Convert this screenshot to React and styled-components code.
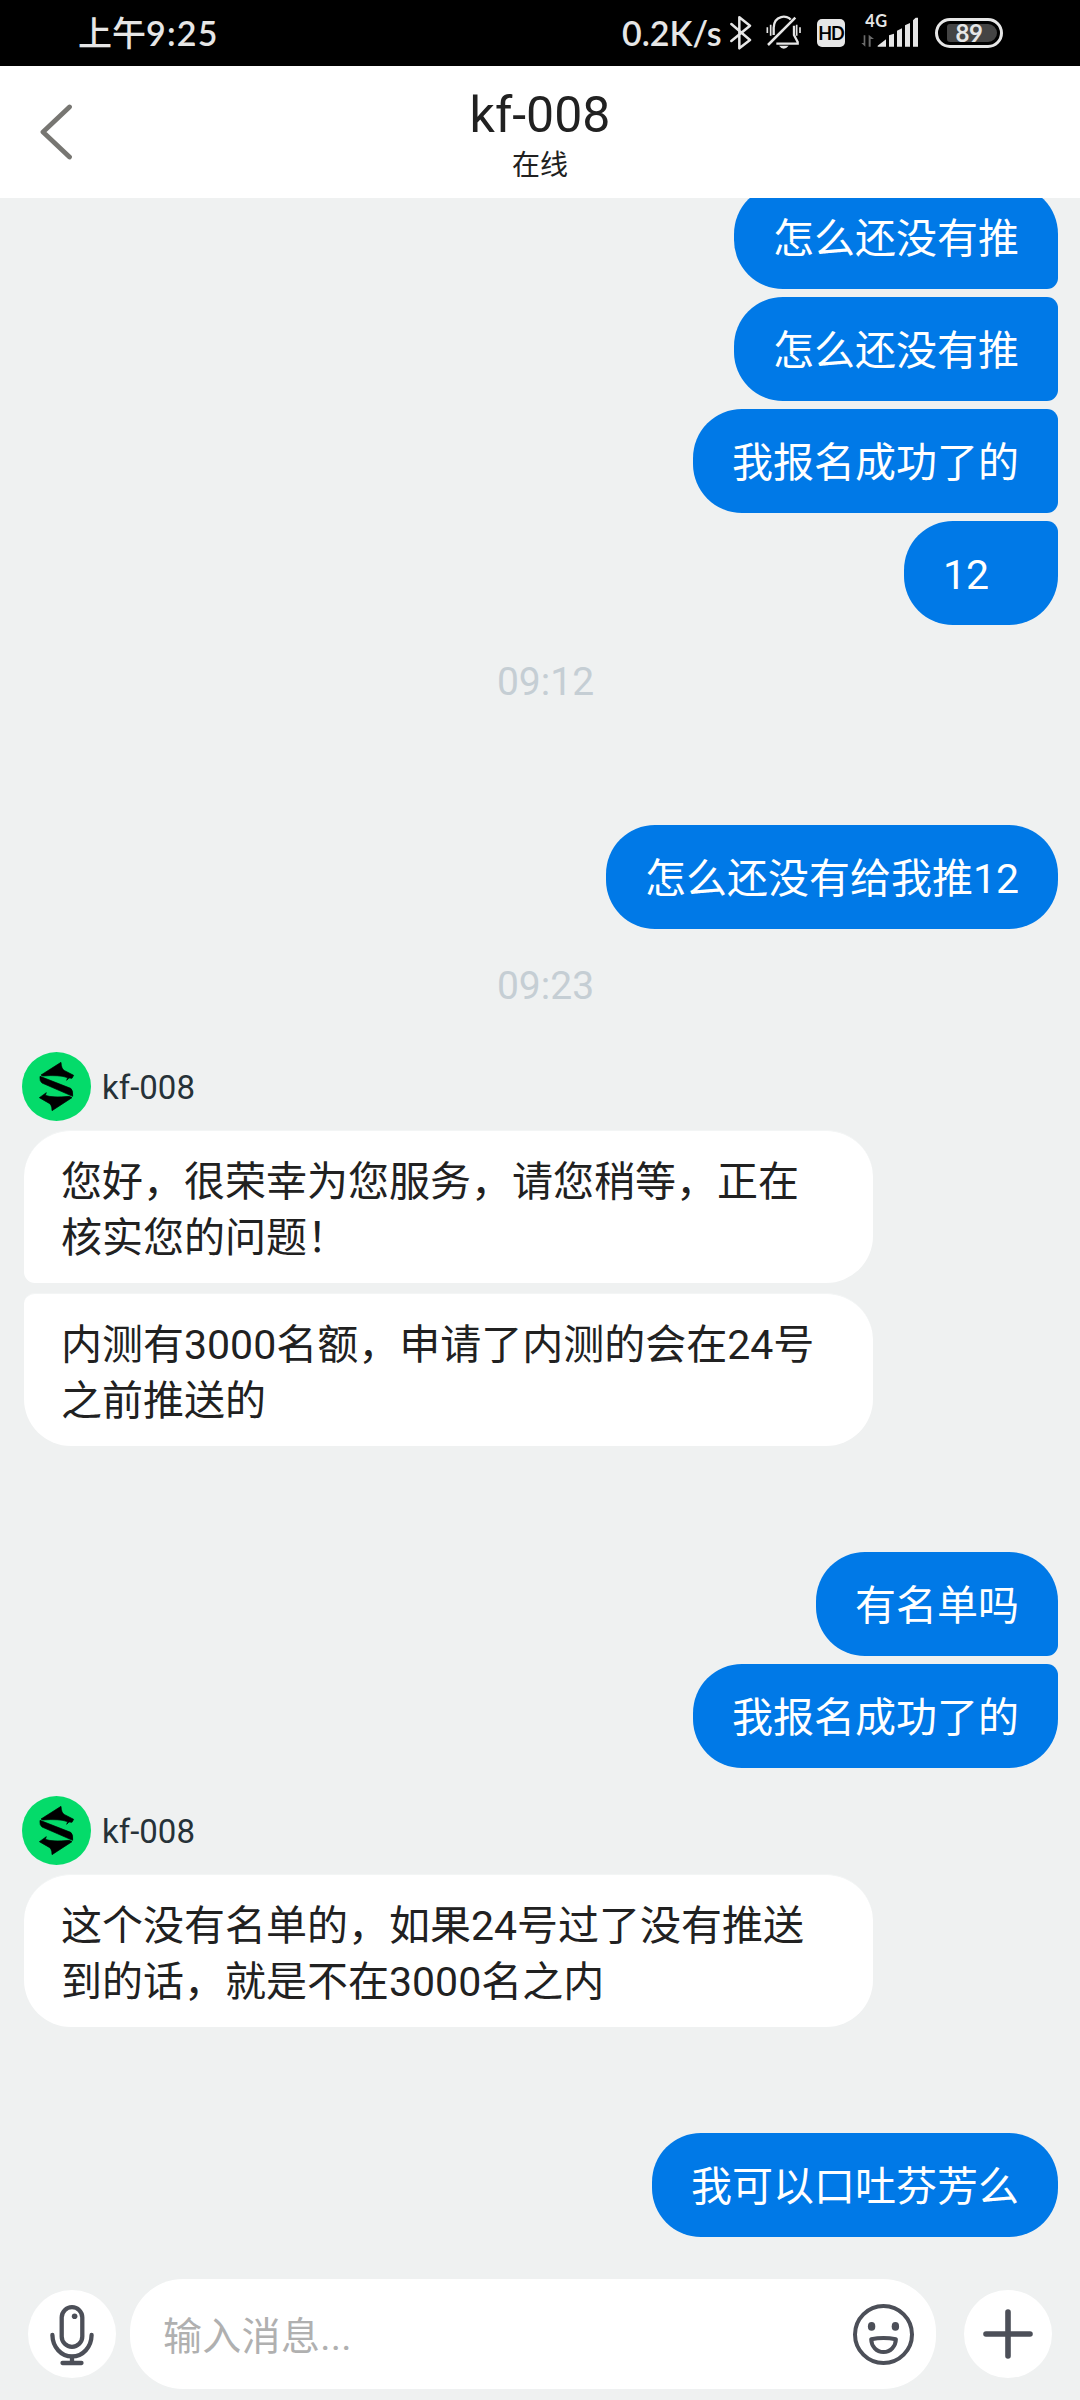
import React from 'react';
import styled, {createGlobalStyle} from 'styled-components';

const conversation = [
    {type: 'sent', top: -13, messages: ['怎么还没有推', '怎么还没有推', '我报名成功了的', '12']},
    {type: 'time', top: 33, label: '09:12'},
    {type: 'sent', top: 121, messages: ['怎么还没有给我推12']},
    {type: 'time', top: 33, label: '09:23'},
    {type: 'received', top: 44, messages: [
        ['您好，很荣幸为您服务，请您稍等，正在', '核实您的问题！'],
        ['内测有3000名额，申请了内测的会在24号', '之前推送的']
    ]},
    {type: 'sent', top: 106, messages: ['有名单吗', '我报名成功了的']},
    {type: 'received', top: 28, messages: [
        ['这个没有名单的，如果24号过了没有推送', '到的话，就是不在3000名之内']
    ]},
    {type: 'sent', top: 106, messages: ['我可以口吐芬芳么']}
];

const App = () => {
    return <Screen>
        <GlobalStyle/>
        <StatusBar/>
        <Header/>
        <Chat>
            {conversation.map((entry, i) => {
                if(entry.type === 'time') return <TimeLabel key={i} $top={entry.top}>{entry.label}</TimeLabel>
                if(entry.type === 'sent') return <SentMessages key={i} {...entry}/>
                return <ReceivedMessages key={i} {...entry}/>
            })}
        </Chat>
        <Composer/>
    </Screen>
}

const StatusBar = () => {
    return <StatusBarContainer>
        <Clock><ClockPeriod>上午</ClockPeriod>9:25</Clock>
        <NetSpeed>0.2K/s</NetSpeed>
        <BluetoothIcon/>
        <MutedBellIcon/>
        <HdBadge>HD</HdBadge>
        <SignalIcon/>
        <Battery>
            <BatteryLevel>89</BatteryLevel>
        </Battery>
    </StatusBarContainer>
}

const Header = () => {
    return <HeaderContainer>
        <BackButton aria-label="Back">
            <svg width="34" height="58" viewBox="0 0 34 58" fill="none" stroke="#777672" strokeWidth="4.8" strokeLinecap="round" strokeLinejoin="round">
                <path d="M29.5 4 L3 29 L29.5 54"/>
            </svg>
        </BackButton>
        <Titles>
            <Title>kf-008</Title>
            <Subtitle>在线</Subtitle>
        </Titles>
    </HeaderContainer>
}

const SentMessages = ({messages, top}) => {
    return <SentGroup $top={top}>
        {messages.map((text, i) => <SentBubble key={i} $first={i === 0} $last={i === messages.length - 1}>{text}</SentBubble>)}
    </SentGroup>
}

const ReceivedMessages = ({messages, top}) => {
    return <ReceivedGroup $top={top}>
        <Sender>
            <Avatar/>
            <SenderName>kf-008</SenderName>
        </Sender>
        {messages.map((lines, i) => <ReceivedBubble key={i} $joinTop={i > 0} $joinBottom={i < messages.length - 1}>
            {lines.map(line => <div key={line}>{line}</div>)}
        </ReceivedBubble>)}
    </ReceivedGroup>
}

const Composer = () => {
    return <ComposerContainer>
        <RoundButton aria-label="Voice">
            <svg width="88" height="88" viewBox="0 0 88 88" fill="none" stroke="#4c4f58" strokeWidth="4.3" strokeLinecap="round">
                <rect x="33.7" y="17.2" width="20.6" height="39.6" rx="10.3"/>
                <path d="M24.4 45 C24.6 57 33 66.4 44 66.4 S63.4 57 63.6 45"/>
                <path d="M44 67 V72 M34.5 73 H53.5"/>
                <circle cx="46.6" cy="26.2" r="2.8" fill="#4c4f58" stroke="none"/>
            </svg>
        </RoundButton>
        <InputBox>
            <Placeholder>输入消息...</Placeholder>
            <svg width="61" height="61" viewBox="0 0 61 61" fill="none" stroke="#4c4f58" strokeWidth="4" strokeLinejoin="round">
                <circle cx="30.5" cy="30.5" r="28.5"/>
                <ellipse cx="18.6" cy="22.4" rx="3.7" ry="4.4" fill="#4c4f58" stroke="none"/>
                <ellipse cx="42.4" cy="22.4" rx="3.7" ry="4.4" fill="#4c4f58" stroke="none"/>
                <path d="M18.2 35.2 Q30.5 33 42.9 35.2 C42.7 42.4 37.5 48 30.5 48 S18.4 42.4 18.2 35.2 Z"/>
            </svg>
        </InputBox>
        <RoundButton aria-label="More">
            <svg width="88" height="88" viewBox="0 0 88 88" stroke="#4c4f58" strokeWidth="5.6" strokeLinecap="round">
                <path d="M44 22 V66 M22 44 H66"/>
            </svg>
        </RoundButton>
    </ComposerContainer>
}

const Avatar = () => {
    return <svg width="69" height="69" viewBox="0 0 207 207" stroke="#000" strokeWidth="2">
        <circle cx="103.5" cy="103.5" r="103.5" fill="#04db6a" stroke="none"/>
        <path d="M57 69 L117 31 Q118 52 128 56 L155 70 L150 79 L141 78 L134 85 L137 77 Q112 68 62 72 Z"/>
        <path d="M54 73 L146 109 Q154 115 152 133 L60 93 Q52 87 54 73 Z"/>
        <path d="M52 137 L73 122 L70 130 Q92 138 142 133 L150 137 L90 176 Q90 156 78 152 Z"/>
    </svg>
}

const BluetoothIcon = () => {
    return <svg width="22" height="36" viewBox="390 46 66 108" fill="none" stroke="#e6e6e6" strokeWidth="7.5" strokeLinejoin="round" strokeLinecap="round">
        <path d="M394 73 L450 121 L418 146 V53 L450 78 L394 124"/>
    </svg>
}

const MutedBellIcon = () => {
    return <Spaced $left={14}>
        <svg width="36" height="36" viewBox="499 46 108 108" fill="none" stroke="#e6e6e6" strokeWidth="7">
            <path d="M505 136 L587 54" strokeWidth="7.5"/>
            <path d="M522 106 V84 C523 45 564 46 573 60 M583 78 V106 L594 127 V132 H530"/>
            <path d="M503 83 V100 M513 75 V108 M591 75 V108 M601 83 V100" strokeWidth="5"/>
            <path d="M538 138 H567 Q552 156 538 138 Z" fill="#e6e6e6" stroke="none"/>
        </svg>
    </Spaced>
}

const SignalIcon = () => {
    return <Spaced $left={16}>
        <svg width="60" height="46" viewBox="786 31 180 138" fill="#e6e6e6">
            <text x="799" y="83" fontFamily="Lato" fontWeight="700" fontSize="49" letterSpacing="1">4G</text>
            <g fill="#6b6b6b">
                <path d="M794 107 H799 V141 L787 130 H794 Z"/>
                <path d="M809 141 V105 L825 118 H815 V141 Z"/>
            </g>
            <path d="M836 141 V138 L861 119 V141 Z"/>
            <path d="M870 141 V107 L885 102 V141 Z"/>
            <path d="M894 141 V93 L909 86 V141 Z"/>
            <path d="M918 141 V77 L933 70 V141 Z"/>
            <path d="M942 141 V62 L950 54 H957 V141 Z"/>
        </svg>
    </Spaced>
}

const GlobalStyle = createGlobalStyle`
    body {
        margin: 0;
        font-family: Roboto, "Noto Sans CJK SC", sans-serif;
    }
`;

const Screen = styled.div`
    display: flex;
    flex-direction: column;
    width: 1080px;
    height: 2400px;
    background: #eff1f1;
    overflow: hidden;
`;

const StatusBarContainer = styled.div`
    display: flex;
    flex-shrink: 0;
    align-items: center;
    height: 66px;
    padding: 0 77px 0 78px;
    box-sizing: border-box;
    background: #000;
    color: #e6e6e6;
    font-family: Lato, "Noto Sans CJK SC", sans-serif;
    font-weight: 600;
    font-size: 34px;
    line-height: 66px;
`;

const Clock = styled.div`
    flex: 1;
    letter-spacing: 1.2px;
`;

const ClockPeriod = styled.span`
    font-size: 34px;
    font-weight: 500;
    letter-spacing: 0;
`;

const NetSpeed = styled.div`
    width: 108px;
    white-space: nowrap;
`;

const Spaced = styled.div`
    display: flex;
    margin-left: ${props => props.$left}px;
`;

const HdBadge = styled.div`
    width: 28px;
    height: 28px;
    margin-left: 15px;
    border-radius: 5px;
    background: #e6e6e6;
    color: #000;
    font-size: 18px;
    font-weight: 700;
    line-height: 29px;
    text-align: center;
    letter-spacing: -1px;
`;

const Battery = styled.div`
    display: flex;
    width: 68px;
    height: 30px;
    margin-left: 14px;
    padding: 3px 3px 3px 9px;
    box-sizing: border-box;
    border: 3px solid #e6e6e6;
    border-radius: 15px;
`;

const BatteryLevel = styled.div`
    width: 50px;
    height: 18px;
    padding-right: 6px;
    box-sizing: border-box;
    border-radius: 3px 9px 9px 3px;
    background: #444;
    font-size: 24px;
    font-weight: 700;
    line-height: 18px;
    text-align: center;
    letter-spacing: -0.5px;
`;

const HeaderContainer = styled.div`
    display: flex;
    flex-shrink: 0;
    align-items: center;
    height: 132px;
    padding: 0 40px;
    background: #fff;
`;

const BackButton = styled.button`
    display: flex;
    width: 34px;
    padding: 0;
    border: none;
    background: none;
`;

const Titles = styled.div`
    display: flex;
    flex: 1;
    flex-direction: column;
    align-items: center;
    margin-right: 34px;
    padding-top: 10px;
    color: #212121;
`;

const Title = styled.div`
    font-size: 50px;
    line-height: 58px;
`;

const Subtitle = styled.div`
    font-size: 28px;
    line-height: 44px;
`;

const Chat = styled.div`
    display: flow-root;
    flex: 1;
    min-height: 0;
    padding: 0 22px;
    overflow: hidden;
    font-size: 41px;
`;

const TimeLabel = styled.div`
    margin-top: ${props => props.$top}px;
    padding-left: 11px;
    height: 46px;
    line-height: 48px;
    font-size: 39px;
    text-align: center;
    color: #c5ced4;
`;

const SentGroup = styled.div`
    display: flex;
    flex-direction: column;
    align-items: flex-end;
    gap: 8px;
    margin-top: ${props => props.$top}px;
`;

const SentBubble = styled.div`
    height: 104px;
    min-width: 154px;
    padding: 2px 39px 0;
    box-sizing: border-box;
    border-radius: 49px ${props => props.$first? 49 : 11}px ${props => props.$last? 49 : 11}px 49px;
    background: #0079e7;
    color: #fff;
    line-height: 104px;
    white-space: nowrap;
`;

const ReceivedGroup = styled.div`
    margin-top: ${props => props.$top}px;
`;

const Sender = styled.div`
    display: flex;
    align-items: center;
    height: 69px;
    margin-bottom: 9px;
`;

const SenderName = styled.div`
    margin-left: 11px;
    padding-top: 2px;
    font-size: 33px;
    color: #263238;
`;

const ReceivedBubble = styled.div`
    width: 849px;
    height: 153px;
    margin-left: 2px;
    margin-top: ${props => props.$joinTop? 10 : 0}px;
    padding: 23px 37px 0;
    box-sizing: border-box;
    border-radius: ${props => props.$joinTop? 11 : 47}px 47px 47px ${props => props.$joinBottom? 11 : 47}px;
    border-top: 1px solid #f3f5f5;
    background: #fff;
    color: #212121;
    line-height: 56px;
    white-space: nowrap;
`;

const ComposerContainer = styled.div`
    display: flex;
    flex-shrink: 0;
    align-items: center;
    height: 110px;
    padding: 0 28px 11px;
`;

const RoundButton = styled.button`
    display: flex;
    width: 88px;
    height: 88px;
    padding: 0;
    border: none;
    border-radius: 50%;
    background: #fff;
`;

const InputBox = styled.div`
    display: flex;
    flex: 1;
    align-items: center;
    height: 110px;
    margin: 0 28px 0 14px;
    padding: 0 22px 0 33px;
    box-sizing: border-box;
    border-radius: 53px;
    background: #fff;
`;

const Placeholder = styled.div`
    flex: 1;
    padding-bottom: 3px;
    font-size: 39px;
    letter-spacing: 0.3px;
    color: #b0b0b0;
`;

export default App;
